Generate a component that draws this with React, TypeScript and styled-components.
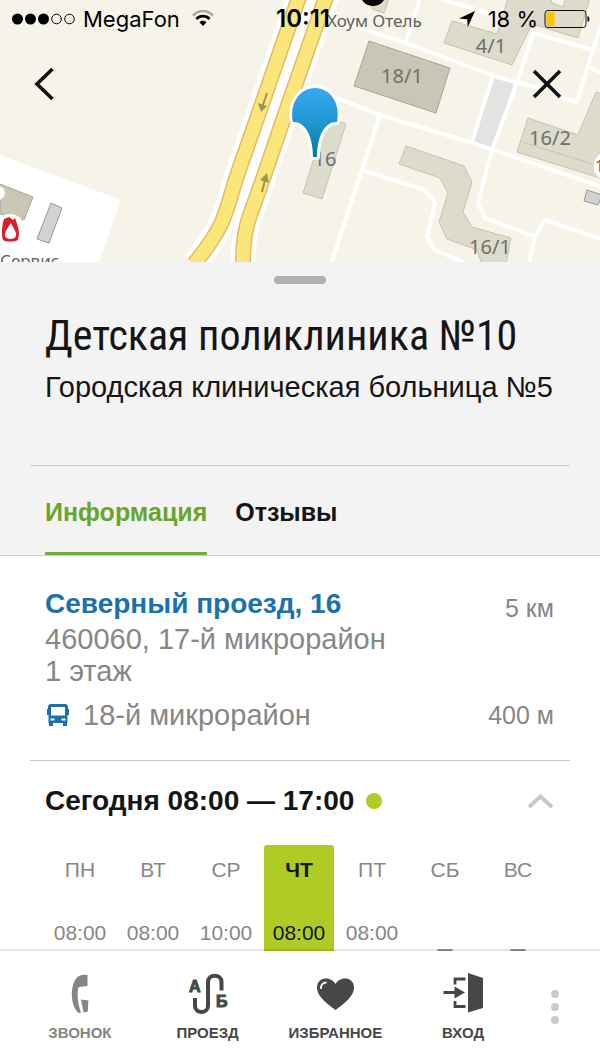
import React from "react";
import styled, { createGlobalStyle } from "styled-components";

const GlobalStyle = createGlobalStyle`
  *, *::before, *::after { box-sizing: border-box; }
  body {
    margin: 0;
    font-family: "Liberation Sans", Arial, sans-serif;
    color: #151515;
    background: #fff;
  }
  button { padding: 0; border: 0; background: none; color: inherit; font: inherit; cursor: pointer; }
  h1, h2, p, ul { margin: 0; padding: 0; }
`;

const Screen = styled.div`
  display: flex;
  flex-direction: column;
  height: 100vh;
  overflow: hidden;
`;

const Scroller = styled.main`
  flex: 1;
  min-height: 0;
  overflow: hidden;
`;

/* ---------- Map header ---------- */

const MapHeader = styled.header`
  position: relative;
  height: 262px;
  overflow: hidden;
  background: #f6f4e8;
`;

const MapCanvas = styled.svg`
  position: absolute;
  inset: 0;
  width: 100%;
  height: 100%;
  font-family: "Noto Sans", "Open Sans", sans-serif;
`;

const StatusBar = styled.div`
  position: relative;
  display: grid;
  grid-template-columns: 1fr auto 1fr;
  align-items: center;
  height: 37px;
  padding: 0 10px 0 12px;
  font-family: Inter, "Liberation Sans", sans-serif;
  font-size: 22px;
  line-height: 28px;
  color: #000;
`;

const StatusGroup = styled.div<{ $end?: boolean }>`
  display: flex;
  align-items: center;
  justify-content: ${(p) => (p.$end ? "flex-end" : "flex-start")};
  gap: ${(p) => (p.$end ? 6 : 8)}px;
`;

const Carrier = styled.span`
  margin-right: 4px;
`;

const Time = styled.time`
  padding-left: 4px;
  font-size: 24px;
  font-weight: 600;
`;

const Percent = styled.span`
  margin-left: 6px;
`;

const MapActions = styled.div`
  position: relative;
  display: flex;
  justify-content: space-between;
  padding: 23px 29px 0 20px;
`;

const IconButton = styled.button`
  display: flex;
  align-items: center;
  justify-content: center;
  width: 48px;
  height: 48px;
`;

/* ---------- Card header ---------- */

const Summary = styled.section`
  background: #f3f3f3;
  border-bottom: 1px solid #cfcfcf;
`;

const Handle = styled.div`
  height: 22px;
  padding-top: 14px;
  &::before {
    content: "";
    display: block;
    width: 52px;
    height: 8px;
    margin: 0 auto;
    border-radius: 4px;
    background: #b0b0b0;
  }
`;

const Titles = styled.div`
  padding: 25px 45px 57px;
  white-space: nowrap;
`;

const Title = styled.h1`
  font-family: "Roboto Condensed", "Liberation Sans", sans-serif;
  font-size: 42px;
  line-height: 54px;
  font-weight: 400;
`;

const Subtitle = styled.p`
  padding-top: 3px;
  font-size: 29px;
  line-height: 42px;
`;

const Divider = styled.hr`
  margin: 0 30px;
  border: 0;
  border-top: 1px solid #c8c8c8;
`;

const Tabs = styled.div`
  display: flex;
  gap: 28px;
  padding: 0 45px;
`;

const Tab = styled.button<{ $active?: boolean }>`
  height: 89px;
  padding-top: 6px;
  border-bottom: 3px solid ${(p) => (p.$active ? "#78a841" : "transparent")};
  color: ${(p) => (p.$active ? "#69a42c" : "#151515")};
  font-size: 25px;
  font-weight: 700;
`;

/* ---------- Address ---------- */

const Address = styled.section`
  padding: 29px 46px 29px 45px;
  color: #878787;
  font-size: 29px;
  line-height: 32px;
`;

const Row = styled.div`
  display: flex;
  align-items: center;
  justify-content: space-between;
`;

const Street = styled.a`
  color: #1b71ad;
  font-size: 28px;
  font-weight: 700;
  line-height: 34px;
  text-decoration: none;
`;

const Distance = styled.span<{ $low?: boolean }>`
  padding-top: ${(p) => (p.$low ? 8 : 0)}px;
  font-size: 25px;
  line-height: 30px;
`;

const StopRow = styled(Row)`
  padding-top: 12px;
`;

const Stop = styled.span`
  display: flex;
  align-items: center;
  gap: 12px;
`;

/* ---------- Working hours ---------- */

const HoursToggle = styled.button`
  display: flex;
  align-items: center;
  justify-content: space-between;
  width: 100%;
  height: 84px;
  padding: 0 46px 4px 45px;
`;

const Today = styled.span`
  display: flex;
  align-items: center;
  gap: 12px;
  font-size: 28px;
  font-weight: 700;
  &::after {
    content: "";
    width: 16px;
    height: 16px;
    border-radius: 50%;
    background: #aecb26;
  }
`;

const Week = styled.ul`
  display: grid;
  grid-template-columns: repeat(7, 1fr);
  gap: 3px;
  padding: 0 47px 0 45px;
  list-style: none;
`;

const Day = styled.li<{ $today?: boolean }>`
  display: flex;
  flex-direction: column;
  align-items: center;
  gap: 23px;
  height: 150px;
  padding-top: 13px;
  border-radius: 3px;
  background: ${(p) => (p.$today ? "#aecb26" : "transparent")};
  color: ${(p) => (p.$today ? "#151515" : "#878787")};
  font-size: 21px;
  line-height: 24px;
`;

const DayName = styled.span<{ $today?: boolean }>`
  font-weight: ${(p) => (p.$today ? 700 : 400)};
`;

const DayTime = styled.span<{ $off?: boolean }>`
  padding-top: ${(p) => (p.$off ? 31 : 16)}px;
  font-size: ${(p) => (p.$off ? 27 : 21)}px;
  white-space: nowrap;
`;

/* ---------- Bottom bar ---------- */

const BottomBar = styled.nav`
  position: relative;
  display: flex;
  flex: none;
  height: 112px;
  padding: 0 17px 0 16px;
  background: #fff;
  box-shadow: 0 -2px 0 rgba(0, 0, 0, 0.1);
`;

const Action = styled.button<{ $muted?: boolean }>`
  display: flex;
  flex: 1;
  flex-direction: column;
  align-items: center;
  gap: 9px;
  padding-top: 21px;
  color: ${(p) => (p.$muted ? "#858585" : "#474747")};
  font-size: 15px;
  font-weight: 700;
  line-height: 20px;
`;

const MoreButton = styled.button`
  display: flex;
  align-items: center;
  justify-content: center;
  width: 56px;
`;

const WEEK = [
  { name: "ПН", from: "08:00" },
  { name: "ВТ", from: "08:00" },
  { name: "СР", from: "10:00" },
  { name: "ЧТ", from: "08:00", today: true },
  { name: "ПТ", from: "08:00" },
  { name: "СБ" },
  { name: "ВС" },
];

const LEFT_ROAD = "M302 -10 L298 0 L280 52 L261 107 L240 167 C232 190 230 202 222 222 C216 235 208 247 194 264";
const RIGHT_ROAD = "M329 -10 L325 0 L298 77 L282 123 L265 173 L253 207 C247 222 243 236 243 266";

function MapDrawing() {
  return (
    <MapCanvas viewBox="0 0 600 262" preserveAspectRatio="xMidYMid slice" aria-hidden="true">
      <defs>
        <linearGradient id="pin" x1="0" y1="0" x2="0" y2="1">
          <stop offset="0" stopColor="#38a9f2" />
          <stop offset="0.5" stopColor="#1f97cf" />
          <stop offset="1" stopColor="#067a96" />
        </linearGradient>
      </defs>
      <path d="M0 155 L121 200 L99 262 H0Z" fill="#fff" />
      <path d="M495 77 L514 83 L494 148 L472 142Z" fill="#e2e4e1" />
      <g fill="none" stroke="#fff" strokeWidth="4" strokeLinejoin="round">
        <path d="M345 23 L406 43 L497 77 L538 88" />
        <path d="M560 97 L577 102 L593 50 L604 18" />
        <path d="M420 -2 L406 43" />
        <path d="M438 -2 L490 14" />
        <path d="M593 50 L533 33 L517 83 L492 150 L478 203 L485 218 L535 237 L529 264" />
        <path d="M535 237 L545 220 L602 239" />
        <path d="M590 68 L602 73" />
        <path d="M337 98 L380 115 L473 143 L602 187" />
        <path d="M493 75 L472 142" />
        <path d="M380 115 L331 264" />
        <path d="M365 171 L425 190 L435 203 L427 237 L435 250 L465 263" />
      </g>
      <g fill="#dddbca" stroke="#c5c3b0" strokeWidth="1">
        <path d="M373 -1 H389 L384 13 L372 9Z" />
        <path d="M452 21 L497 34 L508 -2 H551 L552 3 L563 7 L566 -2 H590 L578 38 L532 24 L512 65 L444 43Z" />
        <path d="M528 118 L578 135 L596 92 L603 94 V179 L517 152Z" />
        <path d="M522 142 L602 167" fill="none" />
        <path d="M406 146 L464 166 L472 182 L463 212 L472 227 L511 238 L506 264 H482 L477 250 L447 239 L439 222 L448 193 L440 178 L399 164Z" />
        <path d="M327 117 L346 124 L322 199 L303 193Z" />
      </g>
      <g fill="#c9c6b5" stroke="#a9a695" strokeWidth="1">
        <path d="M369 41 L450 68 L436 113 L354 86Z" />
        <path d="M0 184 L33 197 L24 220 L0 214Z" />
      </g>
      <g fill="#d2d2d2" stroke="#979797" strokeWidth="1">
        <path d="M51 203 L62 208 L49 243 L37 239Z" />
        <path d="M587 190 L602 195 L598 205 L584 201Z" />
      </g>
      <g fill="none" stroke="#fff" strokeWidth="25">
        <path d={LEFT_ROAD} />
        <path d={RIGHT_ROAD} />
      </g>
      <g fill="none" stroke="#eab85f" strokeWidth="16">
        <path d={LEFT_ROAD} />
        <path d={RIGHT_ROAD} />
      </g>
      <g fill="none" stroke="#f9e77c" strokeWidth="13">
        <path d={LEFT_ROAD} />
        <path d={RIGHT_ROAD} />
      </g>
      <g fill="#a09550" stroke="#a09550">
        <path d="M267 93 L263 105" strokeWidth="2" />
        <path d="M258 103 L267 106 L261 112Z" stroke="none" />
        <path d="M262 192 L265 180" strokeWidth="2" />
        <path d="M260 180 L267 173 L269 183Z" stroke="none" />
      </g>
      <circle cx="373" cy="-7" r="13" fill="#000" />
      <circle cx="-2" cy="193" r="7" fill="#fff" stroke="#ddd" />
      <circle cx="10" cy="229" r="15" fill="#fff" />
      <path
        fillRule="evenodd"
        fill="#d81f30"
        d="M4 219 L9 217 L13 220 L15 218 C17 223 19 229 19 234 L18 240 C14 242 6 242 3 240 C1 234 2 225 4 219Z M11 223 C8 228 4 232 5 236 C6 240 15 240 16 236 C17 232 13 228 11 223Z"
      />
      <circle cx="608" cy="166" r="15" fill="#fff" stroke="#d5d3c5" />
      <text x="595" y="172" fontSize="16" fill="#d8434a">1</text>
      <g fontSize="20" fill="#6f6f6c" textAnchor="middle">
        <text x="402" y="83">18/1</text>
        <text x="491" y="53">4/1</text>
        <text x="550" y="145">16/2</text>
        <text x="490" y="254">16/1</text>
        <text x="325" y="166">16</text>
      </g>
      <g fontSize="17" fill="#5f5f5f">
        <text x="327" y="27">Хоум Отель</text>
        <text x="0" y="267">Сервис</text>
      </g>
      <path
        d="M293 122 C289 103 300 88 315 88 C330 88 341 103 337 122 C324 121 317 138 317 157 H313 C313 138 306 121 293 122Z"
        fill="url(#pin)"
        stroke="#fff"
        strokeWidth="6"
        strokeLinejoin="round"
        paintOrder="stroke"
      />
    </MapCanvas>
  );
}

function SignalIcon() {
  return (
    <svg width="63" height="12" viewBox="0 0 63 12" role="img" aria-label="Сигнал">
      {[5.5, 18.5, 31.5].map((x) => (
        <circle key={x} cx={x} cy="6" r="5.5" fill="#000" />
      ))}
      {[44.5, 57.5].map((x) => (
        <circle key={x} cx={x} cy="6" r="4.8" fill="none" stroke="#000" />
      ))}
    </svg>
  );
}

function WifiIcon() {
  return (
    <svg width="22" height="17" viewBox="0 0 22 17" aria-hidden="true">
      <path d="M1 5.5 C7 -0.6 15 -0.6 21 5.5" fill="none" stroke="#a9a8a0" strokeWidth="2.6" />
      <path d="M4.4 9 C8.2 5.2 13.8 5.2 17.6 9" fill="none" stroke="#000" strokeWidth="2.8" />
      <path d="M7.4 12.3 C9.4 10.2 12.6 10.2 14.6 12.3 L11 16Z" />
    </svg>
  );
}

function PhoneIcon() {
  return (
    <svg width="40" height="42" viewBox="0 0 40 42" fill="currentColor" aria-hidden="true">
      <path d="M27.5 2.8 V14 L18.5 15 C16.8 21 17.6 31 21 40.5 L18.6 41 C9.6 33 10 12 17.5 5 C20 2.7 24 2.6 27.5 2.8Z" />
      <path d="M21 27.5 L28.4 28.5 L27.8 39.5 L23.6 40.6Z" />
    </svg>
  );
}

function RouteIcon() {
  return (
    <svg width="40" height="42" viewBox="0 0 40 42" aria-hidden="true">
      <path
        d="M7 26 V34 C7 42 20 42 20 34 V10 C20 1.5 33.5 1.5 33.5 10 V18.5"
        fill="none"
        stroke="currentColor"
        strokeWidth="4"
      />
      <g fill="currentColor" stroke="currentColor" fontSize="16" fontWeight="700">
        <text x="1" y="20">А</text>
        <text x="28" y="35">Б</text>
      </g>
    </svg>
  );
}

function HeartIcon() {
  return (
    <svg width="40" height="42" viewBox="0 0 40 42" aria-hidden="true">
      <path
        d="M20.5 38 C14 33 2 25 2 16 C2 9 6.5 6.5 11 6.5 C15.5 6.5 19 9 20.5 12 C22 9 25.5 6.5 30 6.5 C34.5 6.5 39 9 39 16 C39 25 27 33 20.5 38Z"
        fill="currentColor"
      />
      <path d="M6 17 C5.5 12.5 8 10.5 11.5 10.5" fill="none" stroke="#fff" strokeWidth="1.8" />
    </svg>
  );
}

function EnterIcon() {
  return (
    <svg width="40" height="42" viewBox="0 0 40 42" aria-hidden="true">
      <path d="M25 1 L40 6 V36 L25 40.5Z" fill="currentColor" />
      <path d="M12 12.5 V7 H22.5 M12 29 V34.5 H22.5" fill="none" stroke="currentColor" strokeWidth="2.8" />
      <path d="M0.5 20.5 H14" stroke="currentColor" strokeWidth="3" />
      <path d="M11.5 14.5 L22 20.5 L11.5 26.5Z" fill="currentColor" />
    </svg>
  );
}

export default function App() {
  return (
    <Screen>
      <GlobalStyle />
      <Scroller>
        <MapHeader>
          <MapDrawing />
          <StatusBar>
            <StatusGroup>
              <SignalIcon />
              <Carrier>MegaFon</Carrier>
              <WifiIcon />
            </StatusGroup>
            <Time>10:11</Time>
            <StatusGroup $end>
              <svg width="18" height="18" viewBox="0 0 18 18" aria-hidden="true">
                <path d="M17 1 L9.8 17 L9.2 9.2 L1 8.6Z" />
              </svg>
              <Percent>18 %</Percent>
              <svg width="46" height="20" viewBox="0 0 46 20" role="img" aria-label="Заряд батареи">
                <rect x="1" y="1.5" width="41" height="17" rx="3" fill="none" stroke="#111" />
                <rect x="2.5" y="3" width="8" height="14" rx="1.5" fill="#fdc500" />
                <path d="M43.5 7 C46 7.5 46 12.5 43.5 13Z" />
              </svg>
            </StatusGroup>
          </StatusBar>
          <MapActions>
            <IconButton aria-label="Назад">
              <svg width="24" height="34" viewBox="0 0 24 34" fill="none" stroke="#111" strokeWidth="3.6">
                <path d="M20.5 2 L5 17 L20.5 32" />
              </svg>
            </IconButton>
            <IconButton aria-label="Закрыть">
              <svg width="32" height="32" viewBox="0 0 32 32" fill="none" stroke="#111" strokeWidth="3.6">
                <path d="M3 3 L29 29 M29 3 L3 29" />
              </svg>
            </IconButton>
          </MapActions>
        </MapHeader>

        <Summary>
          <Handle />
          <Titles>
            <Title>Детская поликлиника №10</Title>
            <Subtitle>Городская клиническая больница №5</Subtitle>
          </Titles>
          <Divider />
          <Tabs role="tablist">
            <Tab role="tab" aria-selected="true" $active>
              Информация
            </Tab>
            <Tab role="tab" aria-selected="false">
              Отзывы
            </Tab>
          </Tabs>
        </Summary>

        <Address>
          <Row>
            <Street href="#address">Северный проезд, 16</Street>
            <Distance $low>5 км</Distance>
          </Row>
          <p>460060, 17-й микрорайон</p>
          <p>1 этаж</p>
          <StopRow>
            <Stop>
              <svg width="26" height="26" viewBox="0 0 26 26" aria-hidden="true">
                <path
                  fillRule="evenodd"
                  fill="#1b71ad"
                  d="M6 2 H20 C22 2 23 3 23 5 V7 H24 V13 H22.5 V21 H22 V24 H18 V21 H8 V24 H4 V21 H3.5 V13 H2 V7 H3 V5 C3 3 4 2 6 2Z M6 5 V13.5 H20 V5Z M5.5 16.5 V18.5 H9.5 V16.5Z M16.5 16.5 V18.5 H20.5 V16.5Z"
                />
              </svg>
              18-й микрорайон
            </Stop>
            <Distance>400 м</Distance>
          </StopRow>
        </Address>
        <Divider />

        <section>
          <HoursToggle aria-expanded="true">
            <Today>Сегодня 08:00 — 17:00</Today>
            <svg width="27" height="16" viewBox="0 0 27 16" fill="none" stroke="#c9c9c9" strokeWidth="4" aria-hidden="true">
              <path d="M2 14 L13.5 3.5 L25 14" />
            </svg>
          </HoursToggle>
          <Week>
            {WEEK.map((day) => (
              <Day key={day.name} $today={day.today}>
                <DayName $today={day.today}>{day.name}</DayName>
                <DayTime $off={!day.from}>{day.from ?? "–"}</DayTime>
              </Day>
            ))}
          </Week>
        </section>
      </Scroller>

      <BottomBar>
        <Action $muted>
          <PhoneIcon />
          ЗВОНОК
        </Action>
        <Action>
          <RouteIcon />
          ПРОЕЗД
        </Action>
        <Action>
          <HeartIcon />
          ИЗБРАННОЕ
        </Action>
        <Action>
          <EnterIcon />
          ВХОД
        </Action>
        <MoreButton aria-label="Ещё">
          <svg width="8" height="36" viewBox="0 0 8 36" fill="#cbcbcb">
            <circle cx="4" cy="5" r="4" />
            <circle cx="4" cy="18" r="4" />
            <circle cx="4" cy="31" r="4" />
          </svg>
        </MoreButton>
      </BottomBar>
    </Screen>
  );
}
